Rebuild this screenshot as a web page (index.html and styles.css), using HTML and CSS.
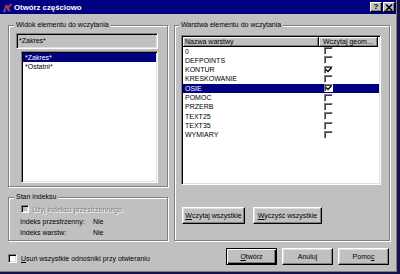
FILE: index.html
```html
<!doctype html>
<html lang="pl">
<head>
  <meta charset="UTF-8">
  <title>Otwórz częściowo</title>
  <link rel="stylesheet" href="styles.css">
</head>
<body>

<div class="Dialog">
  <div class="Dialog-titleBar">
    <svg class="Dialog-icon" viewBox="0 0 11 11">
      <path d="M1 9 L4 2 L6 4 L9 1 L10 3 L7 6 L9 10 L6 9 L4 6 L3 10 Z" fill="#a03a5a"/>
      <rect x="1" y="8" width="3" height="2" fill="#3050c0"/>
    </svg>
    <span class="Dialog-title">Otwórz częściowo</span>
    <span class="Dialog-titleButtons">
      <span class="TitleButton">?</span>
      <span class="TitleButton">
        <svg viewBox="0 0 8 7" width="8" height="7"><path d="M1 0.5 L7 6.5 M7 0.5 L1 6.5" stroke="#000" stroke-width="1.6"/></svg>
      </span>
    </span>
  </div>

  <div class="Dialog-body">
    <div class="Dialog-main">
      <div class="Dialog-side">
        <div class="Group Group--view">
          <div class="Group-label">Widok elementu do wczytania</div>
          <div class="TextField">*Zakres*</div>
          <ul class="ListBox">
            <li class="ListBox-item is-selected">*Zakres*</li>
            <li class="ListBox-item">*Ostatni*</li>
          </ul>
        </div>

        <div class="Group Group--index">
          <div class="Group-label">Stan indeksu</div>
          <label class="CheckRow is-disabled">
            <span class="CheckBox CheckBox--small"></span>
            <span>Użyj indeksu przestrzennego</span>
          </label>
          <dl class="IndexInfo">
            <dt>Indeks przestrzenny:</dt><dd>Nie</dd>
            <dt>Indeks warstw:</dt><dd>Nie</dd>
          </dl>
        </div>
      </div>

      <div class="Group Group--layers">
        <div class="Group-label">Warstwa elementu do wczytania</div>
        <div class="ListView">
          <div class="ListView-header">
            <span class="ListView-column ListView-column--name">Nazwa warstwy</span>
            <span class="ListView-column ListView-column--load">Wczytaj geom...</span>
          </div>
          <ul class="ListView-rows">
            <li class="ListView-row"><span class="ListView-name">0</span><span class="CheckBox CheckBox--row"></span></li>
            <li class="ListView-row"><span class="ListView-name">DEFPOINTS</span><span class="CheckBox CheckBox--row"></span></li>
            <li class="ListView-row"><span class="ListView-name">KONTUR</span><span class="CheckBox CheckBox--row is-checked"><svg viewBox="0 0 7 6" width="7" height="6"><path d="M1 2.5 L3 4.5 L6.5 0.8" fill="none" stroke="#000" stroke-width="1.4"/></svg></span></li>
            <li class="ListView-row"><span class="ListView-name">KRESKOWANIE</span><span class="CheckBox CheckBox--row"></span></li>
            <li class="ListView-row is-selected"><span class="ListView-name">OSIE</span><span class="CheckBox CheckBox--row is-checked"><svg viewBox="0 0 7 6" width="7" height="6"><path d="M1 2.5 L3 4.5 L6.5 0.8" fill="none" stroke="#000" stroke-width="1.4"/></svg></span></li>
            <li class="ListView-row"><span class="ListView-name">POMOC</span><span class="CheckBox CheckBox--row"></span></li>
            <li class="ListView-row"><span class="ListView-name">PRZERB</span><span class="CheckBox CheckBox--row"></span></li>
            <li class="ListView-row"><span class="ListView-name">TEXT25</span><span class="CheckBox CheckBox--row"></span></li>
            <li class="ListView-row"><span class="ListView-name">TEXT35</span><span class="CheckBox CheckBox--row"></span></li>
            <li class="ListView-row"><span class="ListView-name">WYMIARY</span><span class="CheckBox CheckBox--row"></span></li>
          </ul>
        </div>
        <div class="Group-buttons">
          <button class="Button Button--load"><u>W</u>czytaj wszystkie</button>
          <button class="Button Button--clear"><u>W</u>yczyść wszystkie</button>
        </div>
      </div>
    </div>

    <div class="Dialog-footer">
      <label class="CheckRow CheckRow--footer">
        <span class="CheckBox"></span>
        <span><u>U</u>suń wszystkie odnośniki przy otwieraniu</span>
      </label>
      <div class="Dialog-actions">
        <button class="Button Button--dialog Button--default"><u>O</u>twórz</button>
        <button class="Button Button--dialog">Anuluj</button>
        <button class="Button Button--dialog">Pomo<u>c</u></button>
      </div>
    </div>
  </div>
</div>

</body>
</html>
```

FILE: styles.css
```css
body {
  margin: 0;
  background-color: #14144a;
  color: black;
  font-family: "Liberation Sans", Arial, sans-serif;
  font-size: 7px;
}

ul,
dl,
dd {
  margin: 0;
  padding: 0;
}

.Dialog {
  display: flex;
  flex-direction: column;
  width: 396px;
  height: 271px;
  border-right: 1px solid #808080;
  border-bottom: 1px solid #808080;
  background-color: #c0c0c0;
}

.Dialog-titleBar {
  display: flex;
  align-items: center;
  box-sizing: border-box;
  height: 14px;
  padding: 0 1px 0 2px;
  background-color: #000080;
  color: white;
}

.Dialog-icon {
  width: 11px;
  height: 11px;
  margin-right: 1px;
}

.Dialog-title {
  font-size: 7.8px;
  font-weight: bold;
}

.Dialog-titleButtons {
  display: flex;
  column-gap: 1px;
  margin-left: auto;
}

.TitleButton {
  display: flex;
  align-items: center;
  justify-content: center;
  box-sizing: border-box;
  width: 12px;
  height: 10px;
  border: 1px solid;
  border-color: white black black white;
  box-shadow: inset -1px -1px #808080;
  background-color: #c0c0c0;
  color: black;
  font-size: 8px;
  font-weight: bold;
  line-height: 1;
}

.Dialog-body {
  flex: 1;
  padding: 11px 0 0 8px;
}

.Dialog-main {
  display: flex;
  column-gap: 6px;
}

.Dialog-side {
  display: flex;
  flex-direction: column;
  row-gap: 10px;
  width: 160px;
}

/* etched frame */
.Group {
  box-sizing: border-box;
  border: 1px solid #808080;
  box-shadow: inset 1px 1px white, 1px 1px white;
}

.Group--view {
  height: 162px;
}

.Group--index {
  height: 44px;
}

.Group--layers {
  width: 216px;
  height: 216px;
}

.Group-label {
  width: fit-content;
  height: 9px;
  margin: -6px 0 0 5px;
  padding: 0 2px;
  background-color: #c0c0c0;
  line-height: 9px;
  white-space: nowrap;
}

.Group--layers .Group-label {
  margin-left: 4px;
}

/* sunken fields */
.TextField,
.ListBox,
.ListView,
.CheckBox {
  box-sizing: border-box;
  border: 1px solid;
  border-color: #808080 white white #808080;
  box-shadow: inset 1px 1px black, inset -1px -1px #dfdfdf;
}

.TextField {
  width: 142px;
  height: 16px;
  margin: 4px 0 0 7px;
  padding-left: 2px;
  line-height: 14px;
}

.ListBox {
  width: 137px;
  height: 132px;
  margin: 2px 0 0 12px;
  padding: 1px;
  background-color: white;
  list-style-type: none;
}

.ListBox-item {
  height: 9.33px;
  padding-left: 2px;
  line-height: 9.33px;
}

.ListBox-item.is-selected,
.ListView-row.is-selected {
  background-color: #000080;
  color: white;
}

.CheckRow {
  display: flex;
  align-items: center;
  column-gap: 3px;
  height: 10px;
  margin: 3px 0 0 12px;
}

.CheckRow.is-disabled {
  color: #808080;
  text-shadow: 1px 1px white;
}

.CheckRow.is-disabled .CheckBox {
  background-color: #c0c0c0;
}

.CheckBox {
  display: flex;
  align-items: center;
  justify-content: center;
  flex-shrink: 0;
  width: 9px;
  height: 9px;
  background-color: white;
}

.CheckBox--small {
  width: 8px;
  height: 8px;
}

.CheckBox--row {
  width: 9px;
  height: 8px;
  box-shadow: inset 1px 1px #404040;
}

.IndexInfo {
  display: grid;
  grid-template-columns: 73px auto;
  grid-auto-rows: 10px;
  row-gap: 1px;
  margin: 3px 0 0 11px;
  line-height: 10px;
}

.ListView {
  width: 200px;
  height: 150px;
  margin: 6px 0 0 6px;
  padding: 1px;
  background-color: white;
}

.ListView-header {
  display: flex;
  height: 9.5px;
}

.ListView-column {
  box-sizing: border-box;
  height: 100%;
  padding-left: 2px;
  border-right: 1px solid black;
  border-bottom: 1px solid black;
  box-shadow: inset 1px 1px white, inset -1px -1px #808080;
  background-color: #c0c0c0;
  line-height: 9px;
  white-space: nowrap;
}

.ListView-column--name {
  width: 136px;
}

.ListView-column--load {
  width: 59px;
  padding-left: 4px;
}

.ListView-rows {
  list-style-type: none;
}

.ListView-row {
  display: flex;
  align-items: center;
  height: 9.33px;
  line-height: 9.33px;
}

.ListView-name {
  box-sizing: border-box;
  width: 141px;
  padding-left: 2px;
}

.Group-buttons {
  display: flex;
  column-gap: 8px;
  margin: 22px 0 0 7px;
}

.Button {
  box-sizing: border-box;
  height: 17px;
  padding: 0;
  border: 1px solid;
  border-color: white black black white;
  box-shadow: inset -1px -1px #808080, inset 1px 1px #dfdfdf;
  background-color: #c0c0c0;
  color: black;
  font: inherit;
}

.Button--load {
  width: 63px;
}

.Button--clear {
  width: 69px;
}

.Button--dialog {
  width: 51px;
}

.Button--default {
  border-color: black;
  box-shadow: inset 1px 1px white, inset -1px -1px black, inset -2px -2px #808080;
}

.Dialog-footer {
  display: flex;
  align-items: center;
  height: 17px;
  margin-top: 7px;
  padding-right: 7px;
}

.CheckRow--footer {
  column-gap: 4px;
  margin: 3px 0 0 0;
}

.Dialog-actions {
  display: flex;
  column-gap: 5px;
  margin-left: auto;
}
```
